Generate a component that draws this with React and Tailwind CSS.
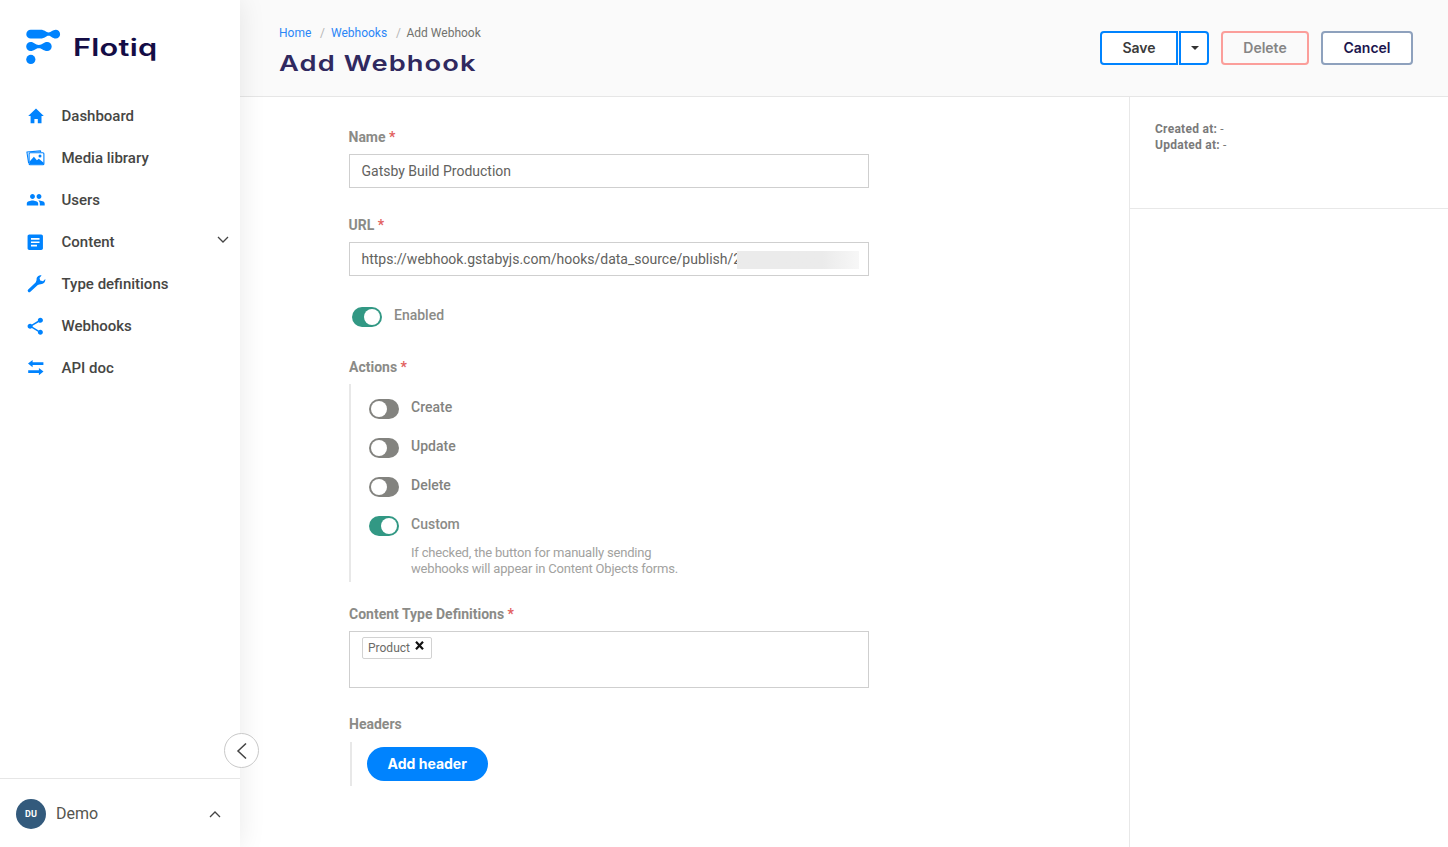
import React from "react";
import { MdPeople, MdArticle, MdShare } from "react-icons/md";

function HomeIcon() {
  return (
    <svg className="-ml-[1px]" width="16" height="16" viewBox="0 0 16 16" fill="#0083fe">
      <path d="M8 .5 15.800 8.100H13.500V15.300H9.800V11H6.400V15.300H2.600V8.100H.200z" />
    </svg>
  );
}

function MediaIcon() {
  return (
    <svg className="-ml-[0.5px]" width="19" height="16" viewBox="0 0 19 16" fill="none">
      <path d="M2.600 13 .9 2 14.500 .900l.200 1.200" stroke="#0083fe" strokeWidth="1.100" strokeLinejoin="round" />
      <rect x="3.100" y="2.700" width="14.800" height="12" rx="1" stroke="#0083fe" strokeWidth="1.100" />
      <path d="M3.400 14.600v-2.900L7.900 6.800l3 3.400 1.900-1.500 4.900 4v1.900z" fill="#0083fe" />
      <circle cx="14" cy="6" r="1.500" fill="#0083fe" />
    </svg>
  );
}

function WrenchIcon() {
  return (
    <svg width="19" height="18" viewBox="0 0 19 18" fill="none">
      <path d="M2.300 15.600 10.500 8" stroke="#0083fe" strokeWidth="3.200" strokeLinecap="round" />
      <path d="M14.500.400C11.300.100 9.300 2.400 9.600 5L8.700 7.500l2.200 2.300 2.600-.600C16.400 9.300 18.600 7.200 18.300 4.100L16 6.200 13.200 5.600 12.500 2.900z" fill="#0083fe" />
    </svg>
  );
}

function SwapIcon() {
  return (
    <svg width="16" height="16" viewBox="0 0 16 16" fill="#0083fe">
      <path d="M0 3.600 4.600 0v2.200H15.400v2.800H4.600v2.200z" />
      <path d="M15.500 11.600 10.900 8v2.200H.200v2.800h10.700v2.200z" />
    </svg>
  );
}

function Logo() {
  return (
    <svg width="36" height="36" viewBox="0 0 36 36" fill="#0083fe">
      <path d="M4.700 .800h10C18.500.800 20 3.400 22.600 3.400 25.200 3.400 26.500 .800 29.700 .800a4.400 4.400 0 0 1 0 8.800C26.500 9.600 25.200 6.800 22.600 6.800 20 6.800 18.500 9.600 14.700 9.600H4.700a4.400 4.400 0 0 1 0-8.800z" />
      <path d="M4.700 13c3.500 0 4.500 2.900 8.100 2.900S17.500 13 21.200 13a4.500 4.500 0 0 1 0 9c-3.700 0-4.800-2.800-8.400-2.800S8.200 22 4.700 22a4.500 4.500 0 0 1 0-9z" />
      <circle cx="4.800" cy="30.400" r="4.600" />
    </svg>
  );
}

function Chevron({ d, w, h, color = "#444", sw = 1.3 }) {
  return (
    <svg width={w} height={h} viewBox={`0 0 ${w} ${h}`} fill="none">
      <path d={d} stroke={color} strokeWidth={sw} />
    </svg>
  );
}

const NAV = [
  { label: "Dashboard", icon: <HomeIcon /> },
  { label: "Media library", icon: <MediaIcon /> },
  { label: "Users", icon: <MdPeople size={19.5} color="#0083fe" /> },
  { label: "Content", icon: <MdArticle size={20.5} color="#0083fe" className="-ml-[1px]" />, open: true },
  { label: "Type definitions", icon: <WrenchIcon /> },
  { label: "Webhooks", icon: <MdShare size={20.5} color="#0083fe" className="-ml-[1px]" /> },
  { label: "API doc", icon: <SwapIcon /> },
];

function Toggle({ on }) {
  return (
    <span className={`flex h-5 w-[30px] shrink-0 items-center rounded-full px-[2px] ${on ? "justify-end bg-[#329884]" : "justify-start bg-[#83837f]"}`}>
      <span className="h-4 w-4 rounded-full bg-white" />
    </span>
  );
}

function Label({ children, required }) {
  return (
    <div className="h-4 text-[14px] leading-4 font-bold text-[#8b8b87]">
      {children}
      {required && <span className="text-[#e2605e]"> *</span>}
    </div>
  );
}

function Sidebar() {
  return (
    <aside className="relative z-10 flex w-[240px] shrink-0 flex-col bg-white shadow-[0_0_26px_rgba(0,0,0,0.09)]">
      <div className="flex h-[95px] items-start gap-[11px] pt-[29px] pl-[26px]">
        <Logo />
        <span className="inline-block origin-left scale-x-[1.28] pt-[1px] font-['Inter'] text-[24px] leading-[35px] font-semibold tracking-[0.2px] text-[#140d46]">Flotiq</span>
      </div>
      <nav className="flex flex-col">
        {NAV.map((n) => (
          <a key={n.label} className="flex h-[42px] items-center pl-[25px]">
            <span className="flex w-[22px] items-center justify-center">{n.icon}</span>
            <span className="ml-[14.5px] text-[15px] font-medium text-[#464644]">{n.label}</span>
            {n.open && (
              <span className="mr-[11px] mb-1.5 ml-auto">
                <Chevron w={12} h={7} d="M1 1l5 5 5-5" />
              </span>
            )}
          </a>
        ))}
      </nav>
      <div className="mt-auto flex h-[69px] items-center border-t border-[#e6e6e6] pt-[2px] pl-[16px]">
        <span className="flex h-[30px] w-[30px] items-center justify-center rounded-full bg-[#335a7c] pt-[1px] text-[9px] font-bold text-white">DU</span>
        <span className="ml-[10px] text-[16px] text-[#55554f]">Demo</span>
        <span className="mr-[19px] ml-auto">
          <Chevron w={12} h={7} d="M1 6l5-5 5 5" />
        </span>
      </div>
      <button className="absolute top-[733px] left-[224px] flex h-[35px] w-[35px] items-center justify-center rounded-full border border-[#c9c9c9] bg-white">
        <Chevron w={11} h={16} d="M10 .5L2 8l8 7.500" sw={1.5} />
      </button>
    </aside>
  );
}

function Header() {
  return (
    <header className="flex h-[97px] shrink-0 justify-between border-b border-[#e6e6e6] bg-[#fafafa] pr-[35px] pl-[39px]">
      <div className="pt-[25px]">
        <div className="flex h-4 text-[12px] leading-4 text-[#72726e]">
          <span className="w-[41px] text-[#2b86f7]">Home</span>
          <span className="w-[11px] text-[#b5b5b5]">/</span>
          <span className="w-[65px] text-[#2b86f7]">Webhooks</span>
          <span className="w-[10.5px] text-[#b5b5b5]">/</span>
          <span>Add Webhook</span>
        </div>
        <h1 className="mt-[7px] w-[160px] origin-left scale-x-[1.24] font-['Inter'] text-[22px] leading-[30px] font-semibold whitespace-nowrap tracking-[0.9px] text-[#30295f]">Add Webhook</h1>
      </div>
      <div className="flex pt-[31px] font-['Inter'] text-[14px] leading-[14px] font-semibold">
        <button className="h-[34px] w-[78px] rounded-l-[4px] border-2 border-[#0083fe] bg-white pb-[1px] text-[#3b3b3b]">Save</button>
        <button className="ml-[1px] flex h-[34px] w-[30px] items-center justify-center rounded-r-[4px] border-2 border-[#0083fe] bg-white pl-[1px]">
          <svg width="8" height="4" viewBox="0 0 8 4"><path d="M0 0h8L4 4z" fill="#333" /></svg>
        </button>
        <button className="ml-[12px] h-[34px] w-[88px] rounded-[4px] border-2 border-[#fb9e9a] bg-[#fafafa] pb-[1px] text-[#858585]">Delete</button>
        <button className="ml-[12px] h-[34px] w-[92px] rounded-[4px] border-2 border-[#8ea1bd] bg-white pb-[1px] text-[#1c164e]">Cancel</button>
      </div>
    </header>
  );
}

const ACTIONS = ["Create", "Update", "Delete"];

export default function App() {
  return (
    <div className="flex h-[847px] w-[1448px] overflow-hidden bg-white font-['Roboto',sans-serif]">
      <Sidebar />
      <div className="flex min-w-0 flex-1 flex-col">
        <Header />
        <div className="flex min-h-0 flex-1">
          <main className="flex w-[889px] shrink-0 flex-col pt-[32px] pl-[108.5px]">
            <Label required>Name</Label>
            <div className="mt-[9px] flex h-[34px] w-[520px] items-center border border-[#cfcfcf] px-3 text-[14px] text-[#62625e]">Gatsby Build Production</div>
            <div className="mt-[29px]"><Label required>URL</Label></div>
            <div className="relative mt-[9px] flex h-[34px] w-[520px] items-center border border-[#cfcfcf] pl-3 text-[14px] text-[#62625e]">
              https://webhook.gstabyjs.com/hooks/data_source/publish/2
              <span className="absolute top-[8px] left-[387px] h-[18px] w-[122px] bg-linear-to-r from-[#ebebeb] from-70% to-[#f7f7f7]" />
            </div>
            <div className="mt-[31px] ml-[3px] flex h-5 items-center">
              <Toggle on />
              <span className="mb-[4px] ml-[12.5px] text-[14px] font-medium text-[#8b8b87]">Enabled</span>
            </div>
            <div className="mt-[32px] ml-[0.5px]"><Label required>Actions</Label></div>
            <div className="mt-[9px] flex h-[198px] flex-col border-l-2 border-[#e8e8e8] pt-[15px] pl-[18px]">
              {ACTIONS.map((a) => (
                <div key={a} className="mb-[19px] flex h-5 items-center">
                  <Toggle />
                  <span className="mb-[3px] ml-[12.5px] text-[14px] font-medium text-[#83837f]">{a}</span>
                </div>
              ))}
              <div className="flex h-5 items-center">
                <Toggle on />
                <span className="mb-[3px] ml-[12.5px] text-[14px] font-medium text-[#8b8b87]">Custom</span>
              </div>
              <p className="mt-[9px] ml-[42.5px] text-[13px] leading-4 tracking-[-0.19px] text-[#a2a2a0]">
                If checked, the button for manually sending
                <br />
                webhooks will appear in Content Objects forms.
              </p>
            </div>
            <div className="mt-[24px] ml-[0.5px]"><Label required>Content Type Definitions</Label></div>
            <div className="mt-[9px] ml-[0.5px] flex h-[57px] w-[520px] items-start border border-[#cfcfcf] pt-[5px] pl-3">
              <span className="flex h-[22px] w-[70px] items-center rounded-[2px] border border-[#d2d2d2] pl-[5px] text-[12px] text-[#6b6b67]">
                Product
                <svg className="mb-[5px] ml-[5px]" width="9" height="9" viewBox="0 0 9 9"><path d="M1 .8l7 7.400M8 .8L1 8.200" stroke="#111" strokeWidth="2.200" /></svg>
              </span>
            </div>
            <div className="mt-[28px] ml-[0.5px]"><Label>Headers</Label></div>
            <div className="mt-[10px] ml-[1px] h-[44px] border-l-2 border-[#e8e8e8] pt-[4.5px] pl-[15px]">
              <button className="h-[34px] w-[121.5px] rounded-full bg-[#0083fe] pb-[1px] font-['Inter'] text-[14px] font-bold text-white">Add header</button>
            </div>
          </main>
          <section className="flex flex-1 flex-col border-l border-[#e8e8e8]">
            <div className="h-[112px] border-b border-[#e8e8e8] pt-[24px] pl-[25px] text-[12px] leading-4 text-[#7a7a7a]">
              <div><span className="font-bold tracking-[0.27px]">Created at:</span> -</div>
              <div><span className="font-bold tracking-[0.27px]">Updated at:</span> -</div>
            </div>
          </section>
        </div>
      </div>
    </div>
  );
}
